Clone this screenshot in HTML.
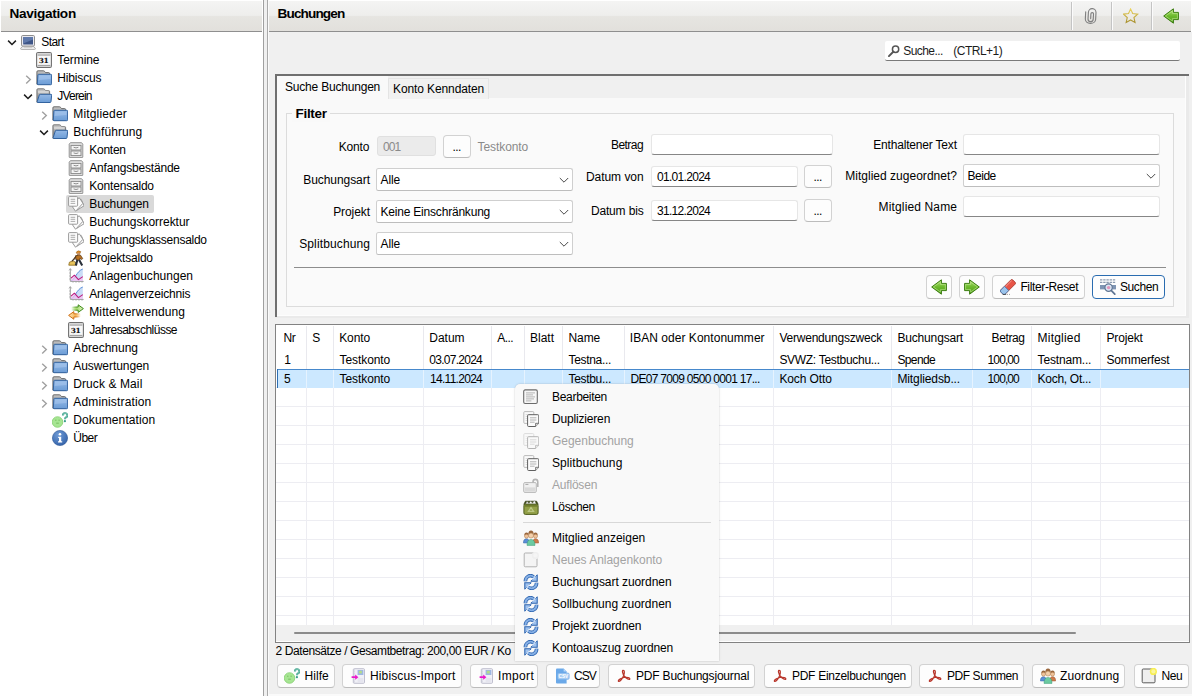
<!DOCTYPE html>
<html lang="de"><head><meta charset="utf-8"><title>Buchungen</title><style>
html,body{margin:0;padding:0;}
body{width:1192px;height:696px;overflow:hidden;background:#fff;position:relative;font-family:'Liberation Sans',sans-serif;font-size:12px;color:#000;}
div,svg.ic{position:absolute;}
.t{white-space:pre;}
.hdr{background:linear-gradient(#f4f4f3 0,#eeeeec 48%,#e6e5e1 52%,#e2e0dc 100%);border-bottom:1px solid #8f8f8f;box-sizing:border-box;}
.btn{background:#fdfdfd;border:1px solid #d2d2d2;border-bottom-color:#bcbcbc;border-radius:4px;box-sizing:border-box;}
</style></head><body>
<div class="hdr" style="left:1px;top:1px;width:261px;height:31px"></div>
<div class="t" style="left:9.40px;top:5.40px;height:18px;line-height:18px;font-size:13.6px;font-weight:bold;letter-spacing:-0.300px;">Navigation</div>
<div style="left:263px;top:0px;width:1px;height:696px;background:#a0a0a0"></div>
<div style="left:264px;top:0px;width:3px;height:696px;background:#f0f0f0"></div>
<div style="left:267px;top:0px;width:1px;height:696px;background:#a9a9a9"></div>
<svg class="ic" style="left:5.5px;top:36px" width="12" height="12" viewBox="0 0 12 12"><path d="M2.1 4.6 L6 8.5 L9.9 4.6" fill="none" stroke="#1f1f1f" stroke-width="1.5"/></svg>
<svg class="ic" style="left:20px;top:34px;" width="16" height="16" viewBox="0 0 16 16"><rect x="1.5" y="1.5" width="13" height="10.6" rx="1.2" fill="#e9e9ef" stroke="#8d8d8d"/><rect x="3.2" y="3.1" width="9.8" height="7.4" fill="#3d5587"/><path d="M3.2 3.1h9.8v2.4l-9.8 4z" fill="#5f79ab"/><path d="M0.6 14.7 L2 12.7 H14 L15.4 14.7 Q15.4 15.4 14.6 15.4 H1.4 Q.6 15.4 .6 14.7Z" fill="#f4f4f4" stroke="#9c9c9c" stroke-width=".8"/><path d="M4 13.6h8" stroke="#c9c9c9" stroke-width=".8"/></svg>
<div class="t" style="left:41.25px;top:33.00px;height:18px;line-height:18px;letter-spacing:-0.573px;">Start</div>
<svg class="ic" style="left:36px;top:52px;" width="16" height="16" viewBox="0 0 16 16"><rect x="0.6" y="0.6" width="14.8" height="14.8" rx="1.4" fill="#f7f7f7" stroke="#6f6f6f" stroke-width="1.1"/><rect x="1.2" y="1.2" width="13.6" height="1.6" fill="#d6d6d6"/><rect x="1.6" y="2.6" width="12.8" height="1" fill="#9b9b9b"/><rect x="1.6" y="12.9" width="12.8" height="1" fill="#9b9b9b"/><text x="7.7" y="10.9" font-family="DejaVu Serif, Liberation Serif, serif" font-weight="bold" font-size="6.9" text-anchor="middle" fill="#0c0c0c" stroke="#0c0c0c" stroke-width=".15">31</text></svg>
<div class="t" style="left:57.25px;top:51.00px;height:18px;line-height:18px;letter-spacing:-0.065px;">Termine</div>
<svg class="ic" style="left:21.5px;top:72px" width="12" height="12" viewBox="0 0 12 12"><path d="M4.2 3.8 L8.3 7.6 L4.2 11.4" fill="none" stroke="#a0a0a0" stroke-width="1.4"/></svg>
<svg class="ic" style="left:36px;top:70px;" width="16" height="16" viewBox="0 0 16 16"><defs><linearGradient id="fg3" x1="0" y1="0" x2="0" y2="1"><stop offset="0" stop-color="#c4c4c4"/><stop offset="1" stop-color="#7e7e7e"/></linearGradient><linearGradient id="fb3" x1="0" y1="0" x2="0" y2="1"><stop offset="0" stop-color="#95b9e6"/><stop offset="1" stop-color="#6c9dd6"/></linearGradient></defs><path d="M0.9 14.2 V1.8 Q0.9 .8 1.9 .8 H7.4 Q8.2 .8 8.7 1.5 L9.6 2.6 H12.6 Q13.6 2.6 13.6 3.6 V14.2 Z" fill="url(#fg3)" stroke="#5e5e5e" stroke-width=".9"/><path d="M2.6 4.3 H14.8 Q15.6 4.3 15.6 5.1 V13.8 Q15.6 14.7 14.7 14.7 H2 Q1.2 14.7 1.3 13.9 L1.9 5 Q2 4.3 2.6 4.3 Z" fill="url(#fb3)" stroke="#33639f" stroke-width="1"/><path d="M2.9 5.4 H14.5 V9 L2.6 10 Z" fill="#a9c8ee" opacity=".55"/></svg>
<div class="t" style="left:57.25px;top:69.00px;height:18px;line-height:18px;letter-spacing:-0.151px;">Hibiscus</div>
<svg class="ic" style="left:21.5px;top:90px" width="12" height="12" viewBox="0 0 12 12"><path d="M2.1 4.6 L6 8.5 L9.9 4.6" fill="none" stroke="#1f1f1f" stroke-width="1.5"/></svg>
<svg class="ic" style="left:36px;top:88px;" width="16" height="16" viewBox="0 0 16 16"><defs><linearGradient id="fg4" x1="0" y1="0" x2="0" y2="1"><stop offset="0" stop-color="#c4c4c4"/><stop offset="1" stop-color="#7e7e7e"/></linearGradient><linearGradient id="fb4" x1="0" y1="0" x2="0" y2="1"><stop offset="0" stop-color="#95b9e6"/><stop offset="1" stop-color="#6c9dd6"/></linearGradient></defs><path d="M0.9 14.2 V1.8 Q0.9 .8 1.9 .8 H7.4 Q8.2 .8 8.7 1.5 L9.6 2.6 H12.6 Q13.6 2.6 13.6 3.6 V14.2 Z" fill="url(#fg4)" stroke="#6d6d6d" stroke-width=".9"/><path d="M2 3.3h10.6M2 4.7h10.6" stroke="#ececec" stroke-width=".7"/><path d="M4.2 6.3 H15 Q15.8 6.3 15.7 7.1 L15 13.6 Q14.9 14.5 14 14.5 H1.8 Q.9 14.5 1.2 13.6 L3.3 7 Q3.5 6.3 4.2 6.3 Z" fill="url(#fb4)" stroke="#33639f" stroke-width="1"/></svg>
<div class="t" style="left:57.25px;top:87.00px;height:18px;line-height:18px;letter-spacing:-0.789px;">JVerein</div>
<svg class="ic" style="left:37.5px;top:108px" width="12" height="12" viewBox="0 0 12 12"><path d="M4.2 3.8 L8.3 7.6 L4.2 11.4" fill="none" stroke="#a0a0a0" stroke-width="1.4"/></svg>
<svg class="ic" style="left:52px;top:106px;" width="16" height="16" viewBox="0 0 16 16"><defs><linearGradient id="fg5" x1="0" y1="0" x2="0" y2="1"><stop offset="0" stop-color="#c4c4c4"/><stop offset="1" stop-color="#7e7e7e"/></linearGradient><linearGradient id="fb5" x1="0" y1="0" x2="0" y2="1"><stop offset="0" stop-color="#95b9e6"/><stop offset="1" stop-color="#6c9dd6"/></linearGradient></defs><path d="M0.9 14.2 V1.8 Q0.9 .8 1.9 .8 H7.4 Q8.2 .8 8.7 1.5 L9.6 2.6 H12.6 Q13.6 2.6 13.6 3.6 V14.2 Z" fill="url(#fg5)" stroke="#5e5e5e" stroke-width=".9"/><path d="M2.6 4.3 H14.8 Q15.6 4.3 15.6 5.1 V13.8 Q15.6 14.7 14.7 14.7 H2 Q1.2 14.7 1.3 13.9 L1.9 5 Q2 4.3 2.6 4.3 Z" fill="url(#fb5)" stroke="#33639f" stroke-width="1"/><path d="M2.9 5.4 H14.5 V9 L2.6 10 Z" fill="#a9c8ee" opacity=".55"/></svg>
<div class="t" style="left:73.25px;top:105.00px;height:18px;line-height:18px;letter-spacing:0.169px;">Mitglieder</div>
<svg class="ic" style="left:37.5px;top:126px" width="12" height="12" viewBox="0 0 12 12"><path d="M2.1 4.6 L6 8.5 L9.9 4.6" fill="none" stroke="#1f1f1f" stroke-width="1.5"/></svg>
<svg class="ic" style="left:52px;top:124px;" width="16" height="16" viewBox="0 0 16 16"><defs><linearGradient id="fg6" x1="0" y1="0" x2="0" y2="1"><stop offset="0" stop-color="#c4c4c4"/><stop offset="1" stop-color="#7e7e7e"/></linearGradient><linearGradient id="fb6" x1="0" y1="0" x2="0" y2="1"><stop offset="0" stop-color="#95b9e6"/><stop offset="1" stop-color="#6c9dd6"/></linearGradient></defs><path d="M0.9 14.2 V1.8 Q0.9 .8 1.9 .8 H7.4 Q8.2 .8 8.7 1.5 L9.6 2.6 H12.6 Q13.6 2.6 13.6 3.6 V14.2 Z" fill="url(#fg6)" stroke="#6d6d6d" stroke-width=".9"/><path d="M2 3.3h10.6M2 4.7h10.6" stroke="#ececec" stroke-width=".7"/><path d="M4.2 6.3 H15 Q15.8 6.3 15.7 7.1 L15 13.6 Q14.9 14.5 14 14.5 H1.8 Q.9 14.5 1.2 13.6 L3.3 7 Q3.5 6.3 4.2 6.3 Z" fill="url(#fb6)" stroke="#33639f" stroke-width="1"/></svg>
<div class="t" style="left:73.25px;top:123.00px;height:18px;line-height:18px;letter-spacing:0.099px;">Buchführung</div>
<svg class="ic" style="left:68px;top:142px;" width="16" height="16" viewBox="0 0 16 16"><path d="M2.4 .7 H13.6 L14.8 2.2 V15 Q14.8 15.6 14.2 15.6 H1.8 Q1.2 15.6 1.2 15 V2.2 Z" fill="#e0e0e0" stroke="#8a8a8a" stroke-width=".9"/><rect x="3" y="3.4" width="10" height="4.6" fill="#f4f4f4" stroke="#858585" stroke-width=".9"/><rect x="3" y="9" width="10" height="4.6" fill="#f4f4f4" stroke="#858585" stroke-width=".9"/><path d="M5.6 5.3 q2.4 1.2 4.8 0 M5.6 10.9 q2.4 1.2 4.8 0" stroke="#8f8f8f" stroke-width="1" fill="none"/></svg>
<div class="t" style="left:89.25px;top:141.00px;height:18px;line-height:18px;letter-spacing:-0.249px;">Konten</div>
<svg class="ic" style="left:68px;top:160px;" width="16" height="16" viewBox="0 0 16 16"><path d="M2.4 .7 H13.6 L14.8 2.2 V15 Q14.8 15.6 14.2 15.6 H1.8 Q1.2 15.6 1.2 15 V2.2 Z" fill="#e0e0e0" stroke="#8a8a8a" stroke-width=".9"/><rect x="3" y="3.4" width="10" height="4.6" fill="#f4f4f4" stroke="#858585" stroke-width=".9"/><rect x="3" y="9" width="10" height="4.6" fill="#f4f4f4" stroke="#858585" stroke-width=".9"/><path d="M5.6 5.3 q2.4 1.2 4.8 0 M5.6 10.9 q2.4 1.2 4.8 0" stroke="#8f8f8f" stroke-width="1" fill="none"/></svg>
<div class="t" style="left:89.25px;top:159.00px;height:18px;line-height:18px;letter-spacing:-0.187px;">Anfangsbestände</div>
<svg class="ic" style="left:68px;top:178px;" width="16" height="16" viewBox="0 0 16 16"><path d="M2.4 .7 H13.6 L14.8 2.2 V15 Q14.8 15.6 14.2 15.6 H1.8 Q1.2 15.6 1.2 15 V2.2 Z" fill="#e0e0e0" stroke="#8a8a8a" stroke-width=".9"/><rect x="3" y="3.4" width="10" height="4.6" fill="#f4f4f4" stroke="#858585" stroke-width=".9"/><rect x="3" y="9" width="10" height="4.6" fill="#f4f4f4" stroke="#858585" stroke-width=".9"/><path d="M5.6 5.3 q2.4 1.2 4.8 0 M5.6 10.9 q2.4 1.2 4.8 0" stroke="#8f8f8f" stroke-width="1" fill="none"/></svg>
<div class="t" style="left:89.25px;top:177.00px;height:18px;line-height:18px;letter-spacing:-0.193px;">Kontensaldo</div>
<div style="left:66px;top:195px;width:88px;height:18px;background:#d9d9d9;border-radius:2px"></div>
<svg class="ic" style="left:68px;top:196px;" width="16" height="16" viewBox="0 0 16 16"><g fill="#fcfcfc" stroke="#909090" stroke-width=".9"><path d="M8.5 4.5 L13.2 3.4 L16 9.8 L9 14.2 Z"/><path d="M6.5 4 L11.4 1.9 L14.9 7.3 L7.6 15.3 L4.6 11 Z"/><rect x=".6" y=".6" width="9" height="9.6" rx=".9"/></g><path d="M2.6 3.3h4.6M2.6 5.3h4.6M2.6 7.4h4.6" stroke="#a3a3a3" stroke-width=".9"/></svg>
<div class="t" style="left:89.25px;top:195.00px;height:18px;line-height:18px;letter-spacing:-0.117px;">Buchungen</div>
<svg class="ic" style="left:68px;top:214px;" width="16" height="16" viewBox="0 0 16 16"><g fill="#fcfcfc" stroke="#909090" stroke-width=".9"><path d="M8.5 4.5 L13.2 3.4 L16 9.8 L9 14.2 Z"/><path d="M6.5 4 L11.4 1.9 L14.9 7.3 L7.6 15.3 L4.6 11 Z"/><rect x=".6" y=".6" width="9" height="9.6" rx=".9"/></g><path d="M2.6 3.3h4.6M2.6 5.3h4.6M2.6 7.4h4.6" stroke="#a3a3a3" stroke-width=".9"/></svg>
<div class="t" style="left:89.25px;top:213.00px;height:18px;line-height:18px;letter-spacing:-0.026px;">Buchungskorrektur</div>
<svg class="ic" style="left:68px;top:232px;" width="16" height="16" viewBox="0 0 16 16"><g fill="#fcfcfc" stroke="#909090" stroke-width=".9"><path d="M8.5 4.5 L13.2 3.4 L16 9.8 L9 14.2 Z"/><path d="M6.5 4 L11.4 1.9 L14.9 7.3 L7.6 15.3 L4.6 11 Z"/><rect x=".6" y=".6" width="9" height="9.6" rx=".9"/></g><path d="M2.6 3.3h4.6M2.6 5.3h4.6M2.6 7.4h4.6" stroke="#a3a3a3" stroke-width=".9"/></svg>
<div class="t" style="left:89.25px;top:231.00px;height:18px;line-height:18px;letter-spacing:-0.261px;">Buchungsklassensaldo</div>
<svg class="ic" style="left:68px;top:250px;" width="16" height="16" viewBox="0 0 16 16"><path d="M.8 15.2 L1.4 12.2 L5.2 10.8 L8.6 13.2 L8.8 15.2 Z" fill="#e8c45c" stroke="#8a6a1c" stroke-width=".8"/><path d="M4 11.2 L11.8 2.8" stroke="#3e3226" stroke-width="1.2"/><path d="M8.2 2.2 q2 -2.4 4.6 -.6 l-.6 1.6 l-3.6 .2z" fill="#e48f26" stroke="#7a4e18" stroke-width=".4"/><circle cx="10.6" cy="3.9" r="1.4" fill="#c9946a"/><path d="M7.6 5.6 L12.4 5 L14.8 8.6 L13.4 9.6 L12 8 L11.8 10.2 L8 9.8 Z" fill="#b8701f" stroke="#4a3018" stroke-width=".6"/><path d="M8 6 L6.4 8.6 L7.4 9.2" fill="none" stroke="#5a3a1c" stroke-width="1.1"/><path d="M9.4 9.8 L7.8 15.4 M11.2 10 L14.2 15.4" stroke="#2a313b" stroke-width="2.1"/></svg>
<div class="t" style="left:89.25px;top:249.00px;height:18px;line-height:18px;letter-spacing:-0.204px;">Projektsaldo</div>
<svg class="ic" style="left:68px;top:268px;" width="16" height="16" viewBox="0 0 16 16"><path d="M2.3 .8 V13.4 H15.6" fill="none" stroke="#9e9e9e" stroke-width="1"/><path d="M1 2.4 L2.3 .6 L3.6 2.4 M1.2 5h1.2M1.2 8h1.2M1.2 11h1.2M5 13.4v1.3M8 13.4v1.3M11 13.4v1.3M14 13.4v1.3" fill="none" stroke="#9e9e9e" stroke-width=".8"/><path d="M3 12.6 C7 12 8.6 3 14.8 1 V13 H3 Z" fill="#c3d8f6" opacity=".9"/><path d="M3 12.6 C7 12 8.6 3 14.8 1" fill="none" stroke="#5b8fd9" stroke-width="1"/><path d="M3 10.2 L6.4 7.2 L10.4 11.6 L14.8 8.6 V13 H3 Z" fill="#f7bdf0" opacity=".7"/><path d="M3 10.2 L6.4 7.2 L10.4 11.6 L14.8 8.6" fill="none" stroke="#bb1a7c" stroke-width="1.05" stroke-linejoin="round"/></svg>
<div class="t" style="left:89.25px;top:267.00px;height:18px;line-height:18px;letter-spacing:0.024px;">Anlagenbuchungen</div>
<svg class="ic" style="left:68px;top:286px;" width="16" height="16" viewBox="0 0 16 16"><path d="M2.3 .8 V13.4 H15.6" fill="none" stroke="#9e9e9e" stroke-width="1"/><path d="M1 2.4 L2.3 .6 L3.6 2.4 M1.2 5h1.2M1.2 8h1.2M1.2 11h1.2M5 13.4v1.3M8 13.4v1.3M11 13.4v1.3M14 13.4v1.3" fill="none" stroke="#9e9e9e" stroke-width=".8"/><path d="M3 12.6 C7 12 8.6 3 14.8 1 V13 H3 Z" fill="#c3d8f6" opacity=".9"/><path d="M3 12.6 C7 12 8.6 3 14.8 1" fill="none" stroke="#5b8fd9" stroke-width="1"/><path d="M3 10.2 L6.4 7.2 L10.4 11.6 L14.8 8.6 V13 H3 Z" fill="#f7bdf0" opacity=".7"/><path d="M3 10.2 L6.4 7.2 L10.4 11.6 L14.8 8.6" fill="none" stroke="#bb1a7c" stroke-width="1.05" stroke-linejoin="round"/></svg>
<div class="t" style="left:89.25px;top:285.00px;height:18px;line-height:18px;letter-spacing:-0.163px;">Anlagenverzeichnis</div>
<svg class="ic" style="left:68px;top:304px;" width="16" height="16" viewBox="0 0 16 16"><defs><linearGradient id="ga16" x1="0" x2="1"><stop offset=".05" stop-color="#8fd04e" stop-opacity="0"/><stop offset=".45" stop-color="#a6dc6c"/><stop offset="1" stop-color="#dcf3c0"/></linearGradient><linearGradient id="gas16" x1="0" x2="1"><stop offset=".1" stop-color="#3f8a1a" stop-opacity="0"/><stop offset=".5" stop-color="#3f8a1a"/></linearGradient><linearGradient id="gb16" x1="1" x2="0"><stop offset=".05" stop-color="#f5a83d" stop-opacity="0"/><stop offset=".45" stop-color="#f7b453"/><stop offset="1" stop-color="#fde4b8"/></linearGradient><linearGradient id="gbs16" x1="1" x2="0"><stop offset=".1" stop-color="#cf6f12" stop-opacity="0"/><stop offset=".5" stop-color="#cf6f12"/></linearGradient></defs><path d="M2.5 3 H10.2 V.8 L15.4 4.6 L10.2 8.4 V6.2 H2.5 Z" fill="url(#ga16)" stroke="url(#gas16)" stroke-width="1" stroke-linejoin="round"/><path d="M13.5 9.8 H5.8 V7.6 L.6 11.4 L5.8 15.2 V13 H13.5 Z" fill="url(#gb16)" stroke="url(#gbs16)" stroke-width="1" stroke-linejoin="round"/></svg>
<div class="t" style="left:89.25px;top:303.00px;height:18px;line-height:18px;letter-spacing:0.116px;">Mittelverwendung</div>
<svg class="ic" style="left:68px;top:322px;" width="16" height="16" viewBox="0 0 16 16"><rect x="0.6" y="0.6" width="14.8" height="14.8" rx="1.4" fill="#f7f7f7" stroke="#6f6f6f" stroke-width="1.1"/><rect x="1.2" y="1.2" width="13.6" height="1.6" fill="#d6d6d6"/><rect x="1.6" y="2.6" width="12.8" height="1" fill="#9b9b9b"/><rect x="1.6" y="12.9" width="12.8" height="1" fill="#9b9b9b"/><text x="7.7" y="10.9" font-family="DejaVu Serif, Liberation Serif, serif" font-weight="bold" font-size="6.9" text-anchor="middle" fill="#0c0c0c" stroke="#0c0c0c" stroke-width=".15">31</text></svg>
<div class="t" style="left:89.25px;top:321.00px;height:18px;line-height:18px;letter-spacing:-0.517px;">Jahresabschlüsse</div>
<svg class="ic" style="left:37.5px;top:342px" width="12" height="12" viewBox="0 0 12 12"><path d="M4.2 3.8 L8.3 7.6 L4.2 11.4" fill="none" stroke="#a0a0a0" stroke-width="1.4"/></svg>
<svg class="ic" style="left:52px;top:340px;" width="16" height="16" viewBox="0 0 16 16"><defs><linearGradient id="fg18" x1="0" y1="0" x2="0" y2="1"><stop offset="0" stop-color="#c4c4c4"/><stop offset="1" stop-color="#7e7e7e"/></linearGradient><linearGradient id="fb18" x1="0" y1="0" x2="0" y2="1"><stop offset="0" stop-color="#95b9e6"/><stop offset="1" stop-color="#6c9dd6"/></linearGradient></defs><path d="M0.9 14.2 V1.8 Q0.9 .8 1.9 .8 H7.4 Q8.2 .8 8.7 1.5 L9.6 2.6 H12.6 Q13.6 2.6 13.6 3.6 V14.2 Z" fill="url(#fg18)" stroke="#5e5e5e" stroke-width=".9"/><path d="M2.6 4.3 H14.8 Q15.6 4.3 15.6 5.1 V13.8 Q15.6 14.7 14.7 14.7 H2 Q1.2 14.7 1.3 13.9 L1.9 5 Q2 4.3 2.6 4.3 Z" fill="url(#fb18)" stroke="#33639f" stroke-width="1"/><path d="M2.9 5.4 H14.5 V9 L2.6 10 Z" fill="#a9c8ee" opacity=".55"/></svg>
<div class="t" style="left:73.25px;top:339.00px;height:18px;line-height:18px;letter-spacing:0.009px;">Abrechnung</div>
<svg class="ic" style="left:37.5px;top:360px" width="12" height="12" viewBox="0 0 12 12"><path d="M4.2 3.8 L8.3 7.6 L4.2 11.4" fill="none" stroke="#a0a0a0" stroke-width="1.4"/></svg>
<svg class="ic" style="left:52px;top:358px;" width="16" height="16" viewBox="0 0 16 16"><defs><linearGradient id="fg19" x1="0" y1="0" x2="0" y2="1"><stop offset="0" stop-color="#c4c4c4"/><stop offset="1" stop-color="#7e7e7e"/></linearGradient><linearGradient id="fb19" x1="0" y1="0" x2="0" y2="1"><stop offset="0" stop-color="#95b9e6"/><stop offset="1" stop-color="#6c9dd6"/></linearGradient></defs><path d="M0.9 14.2 V1.8 Q0.9 .8 1.9 .8 H7.4 Q8.2 .8 8.7 1.5 L9.6 2.6 H12.6 Q13.6 2.6 13.6 3.6 V14.2 Z" fill="url(#fg19)" stroke="#5e5e5e" stroke-width=".9"/><path d="M2.6 4.3 H14.8 Q15.6 4.3 15.6 5.1 V13.8 Q15.6 14.7 14.7 14.7 H2 Q1.2 14.7 1.3 13.9 L1.9 5 Q2 4.3 2.6 4.3 Z" fill="url(#fb19)" stroke="#33639f" stroke-width="1"/><path d="M2.9 5.4 H14.5 V9 L2.6 10 Z" fill="#a9c8ee" opacity=".55"/></svg>
<div class="t" style="left:73.25px;top:357.00px;height:18px;line-height:18px;letter-spacing:-0.061px;">Auswertungen</div>
<svg class="ic" style="left:37.5px;top:378px" width="12" height="12" viewBox="0 0 12 12"><path d="M4.2 3.8 L8.3 7.6 L4.2 11.4" fill="none" stroke="#a0a0a0" stroke-width="1.4"/></svg>
<svg class="ic" style="left:52px;top:376px;" width="16" height="16" viewBox="0 0 16 16"><defs><linearGradient id="fg20" x1="0" y1="0" x2="0" y2="1"><stop offset="0" stop-color="#c4c4c4"/><stop offset="1" stop-color="#7e7e7e"/></linearGradient><linearGradient id="fb20" x1="0" y1="0" x2="0" y2="1"><stop offset="0" stop-color="#95b9e6"/><stop offset="1" stop-color="#6c9dd6"/></linearGradient></defs><path d="M0.9 14.2 V1.8 Q0.9 .8 1.9 .8 H7.4 Q8.2 .8 8.7 1.5 L9.6 2.6 H12.6 Q13.6 2.6 13.6 3.6 V14.2 Z" fill="url(#fg20)" stroke="#5e5e5e" stroke-width=".9"/><path d="M2.6 4.3 H14.8 Q15.6 4.3 15.6 5.1 V13.8 Q15.6 14.7 14.7 14.7 H2 Q1.2 14.7 1.3 13.9 L1.9 5 Q2 4.3 2.6 4.3 Z" fill="url(#fb20)" stroke="#33639f" stroke-width="1"/><path d="M2.9 5.4 H14.5 V9 L2.6 10 Z" fill="#a9c8ee" opacity=".55"/></svg>
<div class="t" style="left:73.25px;top:375.00px;height:18px;line-height:18px;letter-spacing:0.094px;">Druck &amp; Mail</div>
<svg class="ic" style="left:37.5px;top:396px" width="12" height="12" viewBox="0 0 12 12"><path d="M4.2 3.8 L8.3 7.6 L4.2 11.4" fill="none" stroke="#a0a0a0" stroke-width="1.4"/></svg>
<svg class="ic" style="left:52px;top:394px;" width="16" height="16" viewBox="0 0 16 16"><defs><linearGradient id="fg21" x1="0" y1="0" x2="0" y2="1"><stop offset="0" stop-color="#c4c4c4"/><stop offset="1" stop-color="#7e7e7e"/></linearGradient><linearGradient id="fb21" x1="0" y1="0" x2="0" y2="1"><stop offset="0" stop-color="#95b9e6"/><stop offset="1" stop-color="#6c9dd6"/></linearGradient></defs><path d="M0.9 14.2 V1.8 Q0.9 .8 1.9 .8 H7.4 Q8.2 .8 8.7 1.5 L9.6 2.6 H12.6 Q13.6 2.6 13.6 3.6 V14.2 Z" fill="url(#fg21)" stroke="#5e5e5e" stroke-width=".9"/><path d="M2.6 4.3 H14.8 Q15.6 4.3 15.6 5.1 V13.8 Q15.6 14.7 14.7 14.7 H2 Q1.2 14.7 1.3 13.9 L1.9 5 Q2 4.3 2.6 4.3 Z" fill="url(#fb21)" stroke="#33639f" stroke-width="1"/><path d="M2.9 5.4 H14.5 V9 L2.6 10 Z" fill="#a9c8ee" opacity=".55"/></svg>
<div class="t" style="left:73.25px;top:393.00px;height:18px;line-height:18px;letter-spacing:0.155px;">Administration</div>
<svg class="ic" style="left:52px;top:412px;" width="16" height="16" viewBox="0 0 16 16"><circle cx="5.5" cy="10" r="5.3" fill="#a6e592" stroke="#86cf72" stroke-width=".8"/><path d="M3 8.2h1.5M6.4 8.2h1.5" stroke="#7cc066" stroke-width="1"/><path d="M4.2 11.2h2.6" stroke="#7cc066" stroke-width="1.1"/><path d="M10.9 3.4 a2.2 2.2 0 1 1 3 2 q-.9 .5 -.9 1.9" fill="none" stroke="#3a9f88" stroke-width="1.9"/><path d="M10.9 3.4 a2.2 2.2 0 1 1 3 2 q-.9 .5 -.9 1.9" fill="none" stroke="#a9e0d2" stroke-width=".6"/><circle cx="12.9" cy="9.2" r="1.1" fill="#3a9f88"/></svg>
<div class="t" style="left:73.25px;top:411.00px;height:18px;line-height:18px;letter-spacing:0.111px;">Dokumentation</div>
<svg class="ic" style="left:52px;top:430px;" width="16" height="16" viewBox="0 0 16 16"><defs><radialGradient id="gi23" cx=".4" cy=".3" r=".8"><stop offset="0" stop-color="#6f9bd6"/><stop offset="1" stop-color="#2f5ea6"/></radialGradient></defs><circle cx="8" cy="8" r="7.6" fill="url(#gi23)" stroke="#2b5596" stroke-width=".6"/><circle cx="8" cy="4.3" r="1.3" fill="#fff"/><path d="M6.2 6.8 H9.2 V11.2 H10.2 V12.4 H6 V11.2 H7 V8 H6.2 Z" fill="#fff"/></svg>
<div class="t" style="left:73.25px;top:429.00px;height:18px;line-height:18px;letter-spacing:-0.489px;">Über</div>
<div style="left:268px;top:0px;width:924px;height:696px;background:#f0f0f0"></div>
<div style="left:268px;top:0px;width:1px;height:696px;background:#fbfbfb"></div>
<div style="left:268px;top:694px;width:924px;height:2px;background:#fafafa"></div>
<div class="hdr" style="left:269px;top:1px;width:922px;height:31px"></div>
<div style="left:269px;top:0px;width:923px;height:1px;background:#fff"></div>
<div style="left:1191px;top:0px;width:1px;height:32px;background:#fff"></div>
<div class="t" style="left:277.50px;top:5.40px;height:18px;line-height:18px;font-size:13.6px;font-weight:bold;letter-spacing:-0.871px;">Buchungen</div>
<div style="left:1071px;top:2px;width:1px;height:28px;background:#c4c4c4"></div>
<div style="left:1072px;top:2px;width:1px;height:28px;background:#fbfbfb"></div>
<div style="left:1111px;top:2px;width:1px;height:28px;background:#c4c4c4"></div>
<div style="left:1112px;top:2px;width:1px;height:28px;background:#fbfbfb"></div>
<div style="left:1151px;top:2px;width:1px;height:28px;background:#c4c4c4"></div>
<div style="left:1152px;top:2px;width:1px;height:28px;background:#fbfbfb"></div>
<svg class="ic" style="left:1083px;top:8px;" width="16" height="16" viewBox="0 0 16 16"><path d="M2.5 4.2 V11.2 A5.15 4.2 0 0 0 12.8 11.2 V4.4 A3.8 3.9 0 0 0 5.2 4.4 V11 A2.6 2.7 0 0 0 10.4 11 V5.8 A1.3 1.3 0 0 0 7.8 5.8 V10.6" fill="none" stroke="#808080" stroke-width="1.15" stroke-linecap="round" transform="rotate(3 8 8)"/></svg>
<svg class="ic" style="left:1123px;top:8px;" width="16" height="16" viewBox="0 0 16 16"><defs><linearGradient id="gst25" x1="0" y1="0" x2="0" y2="1"><stop offset="0" stop-color="#ecd45c"/><stop offset="1" stop-color="#a8902f"/></linearGradient></defs><path d="M7.60 0.90 L9.66 5.57 L14.73 6.08 L10.93 9.48 L12.01 14.47 L7.60 11.90 L3.19 14.47 L4.27 9.48 L0.47 6.08 L5.54 5.57 Z" fill="#f1eee4" fill-opacity=".5" stroke="url(#gst25)" stroke-width="1.1" stroke-linejoin="miter"/></svg>
<svg class="ic" style="left:1163px;top:8px;" width="16" height="16" viewBox="0 0 16 16"><defs><linearGradient id="gbk26" x1="0" y1="0" x2="0" y2="1"><stop offset="0" stop-color="#b2e276"/><stop offset=".5" stop-color="#6cba2c"/><stop offset="1" stop-color="#4f9a1c"/></linearGradient></defs><path d="M10.4 .8 V4.4 H15.4 V11.6 H10.4 V15.2 L.7 8 Z" fill="url(#gbk26)" stroke="#3b7d10" stroke-width="1" stroke-linejoin="round"/><path d="M9.4 3 V5.4 H14.4 V10.6 H9.4 V13 L2.4 8 Z" fill="none" stroke="#c6ec98" stroke-width=".7" opacity=".8"/></svg>
<div style="left:885px;top:41px;width:295px;height:20px;background:#fff;border-bottom:1px solid #7a7a7a;box-sizing:border-box;border-radius:2px"></div>
<svg class="ic" style="left:887px;top:44px;" width="14" height="14" viewBox="0 0 16 16"><circle cx="9.8" cy="6" r="3.6" fill="none" stroke="#555" stroke-width="1.7"/><path d="M7.2 8.8 L2.2 13.8" stroke="#555" stroke-width="2.2" stroke-linecap="round"/></svg>
<div class="t" style="left:903.20px;top:41.50px;height:18px;line-height:18px;color:#1c1c1c;letter-spacing:-0.562px;">Suche...</div>
<div class="t" style="left:953.30px;top:41.50px;height:18px;line-height:18px;color:#1c1c1c;letter-spacing:-0.502px;">(CTRL+1)</div>
<div style="left:275px;top:74px;width:914px;height:244px;background:#eaeaea"></div>
<div style="left:277px;top:76px;width:909px;height:240px;background:#fdfdfd"></div>
<div style="left:277px;top:76px;width:908px;height:239px;background:#f9f9f9"></div>
<div style="left:275px;top:74px;width:914px;height:2px;background:#6f6f6f"></div>
<div style="left:275px;top:74px;width:2px;height:243px;background:#6f6f6f"></div>
<div style="left:277px;top:76px;width:908px;height:22px;background:#f0f0f0"></div>
<div style="left:277px;top:76px;width:111px;height:23px;background:#f9f9f9"></div>
<div style="left:388px;top:78px;width:101px;height:21px;background:#f1f1f1;border:1px solid #e4e4e4;border-bottom:none;box-sizing:border-box"></div>
<div class="t" style="left:285.00px;top:78.00px;height:18px;line-height:18px;letter-spacing:-0.200px;">Suche Buchungen</div>
<div class="t" style="left:393.00px;top:79.50px;height:18px;line-height:18px;letter-spacing:-0.104px;">Konto Kenndaten</div>
<div style="left:286px;top:113px;width:888px;height:194px;border:1px solid #dcdcdc;box-sizing:border-box;background:#fafafa"></div>
<div style="left:292px;top:106px;width:38px;height:16px;background:#f9f9f9"></div>
<div class="t" style="left:295.50px;top:105.30px;height:18px;line-height:18px;font-size:13.5px;font-weight:bold;letter-spacing:-0.303px;">Filter</div>
<div class="t" style="left:338.70px;top:137.50px;height:18px;line-height:18px;letter-spacing:-0.140px;">Konto</div>
<div style="left:377px;top:136px;width:59px;height:20px;background:#ebebeb;border:1px solid #e0e0e0;box-sizing:border-box;border-radius:3px"></div>
<div class="t" style="left:383.00px;top:138.30px;height:18px;line-height:18px;color:#8a8a8a;letter-spacing:-0.900px;">001</div>
<div class="btn" style="left:443px;top:135px;width:28px;height:23px;"></div>
<div class="t" style="left:452.50px;top:138.00px;height:18px;line-height:18px;letter-spacing:-0.608px;">...</div>
<div class="t" style="left:477.50px;top:137.50px;height:18px;line-height:18px;color:#8a8a8a;letter-spacing:-0.072px;">Testkonto</div>
<div class="t" style="left:303.20px;top:171.00px;height:18px;line-height:18px;letter-spacing:-0.059px;">Buchungsart</div>
<div style="left:376px;top:168px;width:197px;height:23px;background:#fff;border:1px solid #cfcfcf;border-bottom-color:#bdbdbd;box-sizing:border-box;border-radius:2.5px"></div>
<div class="t" style="left:380.50px;top:170.80px;height:18px;line-height:18px;letter-spacing:-0.072px;">Alle</div>
<svg class="ic" style="left:557.5px;top:174.0px" width="12" height="12" viewBox="0 0 12 12"><path d="M1.8 4 L6 8.2 L10.2 4" fill="none" stroke="#4a4a4a" stroke-width="1"/></svg>
<div class="t" style="left:333.20px;top:203.00px;height:18px;line-height:18px;letter-spacing:-0.093px;">Projekt</div>
<div style="left:376px;top:200px;width:197px;height:23px;background:#fff;border:1px solid #cfcfcf;border-bottom-color:#bdbdbd;box-sizing:border-box;border-radius:2.5px"></div>
<div class="t" style="left:380.50px;top:202.80px;height:18px;line-height:18px;letter-spacing:-0.201px;">Keine Einschränkung</div>
<svg class="ic" style="left:557.5px;top:206.0px" width="12" height="12" viewBox="0 0 12 12"><path d="M1.8 4 L6 8.2 L10.2 4" fill="none" stroke="#4a4a4a" stroke-width="1"/></svg>
<div class="t" style="left:299.20px;top:235.00px;height:18px;line-height:18px;letter-spacing:0.128px;">Splitbuchung</div>
<div style="left:376px;top:232px;width:197px;height:23px;background:#fff;border:1px solid #cfcfcf;border-bottom-color:#bdbdbd;box-sizing:border-box;border-radius:2.5px"></div>
<div class="t" style="left:380.50px;top:234.80px;height:18px;line-height:18px;letter-spacing:-0.072px;">Alle</div>
<svg class="ic" style="left:557.5px;top:238.0px" width="12" height="12" viewBox="0 0 12 12"><path d="M1.8 4 L6 8.2 L10.2 4" fill="none" stroke="#4a4a4a" stroke-width="1"/></svg>
<div class="t" style="left:610.90px;top:136.00px;height:18px;line-height:18px;letter-spacing:-0.512px;">Betrag</div>
<div style="left:651px;top:134px;width:182px;height:21px;background:#fff;border:1px solid #e6e6e6;border-bottom:1px solid #868686;box-sizing:border-box;border-radius:3px"></div>
<div class="t" style="left:585.90px;top:168.00px;height:18px;line-height:18px;letter-spacing:-0.029px;">Datum von</div>
<div style="left:651px;top:166px;width:147px;height:21px;background:#fff;border:1px solid #e6e6e6;border-bottom:1px solid #868686;box-sizing:border-box;border-radius:3px"></div>
<div class="t" style="left:657.00px;top:167.80px;height:18px;line-height:18px;letter-spacing:-0.696px;">01.01.2024</div>
<div class="btn" style="left:804px;top:165px;width:28px;height:23px;"></div>
<div class="t" style="left:813.50px;top:168.00px;height:18px;line-height:18px;letter-spacing:-0.608px;">...</div>
<div class="t" style="left:590.90px;top:201.70px;height:18px;line-height:18px;letter-spacing:-0.154px;">Datum bis</div>
<div style="left:651px;top:200px;width:147px;height:21px;background:#fff;border:1px solid #e6e6e6;border-bottom:1px solid #868686;box-sizing:border-box;border-radius:3px"></div>
<div class="t" style="left:657.00px;top:201.80px;height:18px;line-height:18px;letter-spacing:-0.696px;">31.12.2024</div>
<div class="btn" style="left:804px;top:199px;width:28px;height:23px;"></div>
<div class="t" style="left:813.50px;top:202.00px;height:18px;line-height:18px;letter-spacing:-0.608px;">...</div>
<div class="t" style="left:873.20px;top:135.70px;height:18px;line-height:18px;letter-spacing:-0.181px;">Enthaltener Text</div>
<div style="left:963px;top:134px;width:197px;height:21px;background:#fff;border:1px solid #e6e6e6;border-bottom:1px solid #868686;box-sizing:border-box;border-radius:3px"></div>
<div class="t" style="left:845.20px;top:167.00px;height:18px;line-height:18px;letter-spacing:0.021px;">Mitglied zugeordnet?</div>
<div style="left:963px;top:164px;width:197px;height:23px;background:#fff;border:1px solid #cfcfcf;border-bottom-color:#bdbdbd;box-sizing:border-box;border-radius:2.5px"></div>
<div class="t" style="left:967.50px;top:166.80px;height:18px;line-height:18px;letter-spacing:-0.476px;">Beide</div>
<svg class="ic" style="left:1144.5px;top:170.0px" width="12" height="12" viewBox="0 0 12 12"><path d="M1.8 4 L6 8.2 L10.2 4" fill="none" stroke="#4a4a4a" stroke-width="1"/></svg>
<div class="t" style="left:878.60px;top:197.70px;height:18px;line-height:18px;letter-spacing:0.141px;">Mitglied Name</div>
<div style="left:963px;top:196px;width:197px;height:21px;background:#fff;border:1px solid #e6e6e6;border-bottom:1px solid #868686;box-sizing:border-box;border-radius:3px"></div>
<div style="left:294px;top:267px;width:872px;height:1px;background:#8d8d8d"></div>
<div class="btn" style="left:926px;top:275px;width:26px;height:24px;"></div>
<svg class="ic" style="left:931px;top:279px;" width="16" height="16" viewBox="0 0 16 16"><defs><linearGradient id="gbk28" x1="0" y1="0" x2="0" y2="1"><stop offset="0" stop-color="#b2e276"/><stop offset=".5" stop-color="#6cba2c"/><stop offset="1" stop-color="#4f9a1c"/></linearGradient></defs><path d="M10.4 .8 V4.4 H15.4 V11.6 H10.4 V15.2 L.7 8 Z" fill="url(#gbk28)" stroke="#3b7d10" stroke-width="1" stroke-linejoin="round"/><path d="M9.4 3 V5.4 H14.4 V10.6 H9.4 V13 L2.4 8 Z" fill="none" stroke="#c6ec98" stroke-width=".7" opacity=".8"/></svg>
<div class="btn" style="left:959px;top:275px;width:26px;height:24px;"></div>
<svg class="ic" style="left:964px;top:279px;" width="16" height="16" viewBox="0 0 16 16"><defs><linearGradient id="gfw29" x1="0" y1="0" x2="0" y2="1"><stop offset="0" stop-color="#b2e276"/><stop offset=".5" stop-color="#6cba2c"/><stop offset="1" stop-color="#4f9a1c"/></linearGradient></defs><path d="M5.6 .8 V4.4 H.6 V11.6 H5.6 V15.2 L15.3 8 Z" fill="url(#gfw29)" stroke="#3b7d10" stroke-width="1" stroke-linejoin="round"/><path d="M6.6 3 V5.4 H1.6 V10.6 H6.6 V13 L13.6 8 Z" fill="none" stroke="#c6ec98" stroke-width=".7" opacity=".8"/></svg>
<div class="btn" style="left:992px;top:275px;width:93px;height:24px;"></div>
<svg class="ic" style="left:1000px;top:279px;" width="16" height="16" viewBox="0 0 16 16"><g transform="rotate(-45 8 8)"><rect x="-.6" y="5" width="17" height="6" rx="1.4" fill="#e85548" stroke="#a8382e" stroke-width=".8"/><path d="M.8 5 H6 V11 H.8 Q-.6 11 -.6 9.6 V6.4 Q-.6 5 .8 5Z" fill="#9bc4ec" stroke="#4a78ad" stroke-width=".8"/><path d="M6.6 6h8.6" stroke="#f28b80" stroke-width="1"/></g><path d="M2.6 15.4h3.6" stroke="#444" stroke-width=".9"/><path d="M7 15.4h4" stroke="#888" stroke-width=".8" stroke-dasharray="1 1"/></svg>
<div class="t" style="left:1020.40px;top:278.00px;height:18px;line-height:18px;letter-spacing:-0.356px;">Filter-Reset</div>
<div class="btn" style="left:1092px;top:275px;width:73px;height:24px;border:1.5px solid #2a6cb0;"></div>
<svg class="ic" style="left:1100px;top:279px;" width="16" height="16" viewBox="0 0 16 16"><path d="M0 .9h16M0 3.3h16" stroke="#8c9bb0" stroke-width="1.3" stroke-dasharray="2.4 .8"/><rect x="0" y="6" width="16" height="4.4" fill="#7f95b3"/><circle cx="8.6" cy="8.6" r="3.7" fill="#dbe6f4" stroke="#5f7593" stroke-width="1.2"/><circle cx="8.6" cy="8.6" r="1.7" fill="#e294b8"/><path d="M11.4 11.6 L14.8 15.2" stroke="#5f7593" stroke-width="1.7" stroke-linecap="round"/></svg>
<div class="t" style="left:1120.00px;top:278.00px;height:18px;line-height:18px;letter-spacing:-0.421px;">Suchen</div>
<div style="left:275px;top:324px;width:915px;height:319px;background:#fff;border:1px solid #828282;box-sizing:border-box"></div>
<div style="left:276px;top:387px;width:913px;height:1px;background:#ededf2"></div>
<div style="left:276px;top:406px;width:913px;height:1px;background:#ededf2"></div>
<div style="left:276px;top:425px;width:913px;height:1px;background:#ededf2"></div>
<div style="left:276px;top:444px;width:913px;height:1px;background:#ededf2"></div>
<div style="left:276px;top:463px;width:913px;height:1px;background:#ededf2"></div>
<div style="left:276px;top:482px;width:913px;height:1px;background:#ededf2"></div>
<div style="left:276px;top:501px;width:913px;height:1px;background:#ededf2"></div>
<div style="left:276px;top:520px;width:913px;height:1px;background:#ededf2"></div>
<div style="left:276px;top:539px;width:913px;height:1px;background:#ededf2"></div>
<div style="left:276px;top:558px;width:913px;height:1px;background:#ededf2"></div>
<div style="left:276px;top:577px;width:913px;height:1px;background:#ededf2"></div>
<div style="left:276px;top:596px;width:913px;height:1px;background:#ededf2"></div>
<div style="left:276px;top:615px;width:913px;height:1px;background:#ededf2"></div>
<div style="left:277px;top:369px;width:912px;height:18.5px;background:#cce8ff;border-top:1px solid #4688cc;box-sizing:border-box"></div>
<div style="left:277px;top:369px;width:1px;height:18.5px;background:#2f6fb3"></div>
<div style="left:306px;top:326px;width:1px;height:43px;background:#e9e9ee"></div>
<div style="left:306px;top:370px;width:1px;height:17.5px;background:#e6f3ff"></div>
<div style="left:306px;top:388px;width:1px;height:237px;background:#ededf2"></div>
<div style="left:333px;top:326px;width:1px;height:43px;background:#e9e9ee"></div>
<div style="left:333px;top:370px;width:1px;height:17.5px;background:#e6f3ff"></div>
<div style="left:333px;top:388px;width:1px;height:237px;background:#ededf2"></div>
<div style="left:423px;top:326px;width:1px;height:43px;background:#e9e9ee"></div>
<div style="left:423px;top:370px;width:1px;height:17.5px;background:#e6f3ff"></div>
<div style="left:423px;top:388px;width:1px;height:237px;background:#ededf2"></div>
<div style="left:491px;top:326px;width:1px;height:43px;background:#e9e9ee"></div>
<div style="left:491px;top:370px;width:1px;height:17.5px;background:#e6f3ff"></div>
<div style="left:491px;top:388px;width:1px;height:237px;background:#ededf2"></div>
<div style="left:524px;top:326px;width:1px;height:43px;background:#e9e9ee"></div>
<div style="left:524px;top:370px;width:1px;height:17.5px;background:#e6f3ff"></div>
<div style="left:524px;top:388px;width:1px;height:237px;background:#ededf2"></div>
<div style="left:562px;top:326px;width:1px;height:43px;background:#e9e9ee"></div>
<div style="left:562px;top:370px;width:1px;height:17.5px;background:#e6f3ff"></div>
<div style="left:562px;top:388px;width:1px;height:237px;background:#ededf2"></div>
<div style="left:624px;top:326px;width:1px;height:43px;background:#e9e9ee"></div>
<div style="left:624px;top:370px;width:1px;height:17.5px;background:#e6f3ff"></div>
<div style="left:624px;top:388px;width:1px;height:237px;background:#ededf2"></div>
<div style="left:773px;top:326px;width:1px;height:43px;background:#e9e9ee"></div>
<div style="left:773px;top:370px;width:1px;height:17.5px;background:#e6f3ff"></div>
<div style="left:773px;top:388px;width:1px;height:237px;background:#ededf2"></div>
<div style="left:891px;top:326px;width:1px;height:43px;background:#e9e9ee"></div>
<div style="left:891px;top:370px;width:1px;height:17.5px;background:#e6f3ff"></div>
<div style="left:891px;top:388px;width:1px;height:237px;background:#ededf2"></div>
<div style="left:972px;top:326px;width:1px;height:43px;background:#e9e9ee"></div>
<div style="left:972px;top:370px;width:1px;height:17.5px;background:#e6f3ff"></div>
<div style="left:972px;top:388px;width:1px;height:237px;background:#ededf2"></div>
<div style="left:1031px;top:326px;width:1px;height:43px;background:#e9e9ee"></div>
<div style="left:1031px;top:370px;width:1px;height:17.5px;background:#e6f3ff"></div>
<div style="left:1031px;top:388px;width:1px;height:237px;background:#ededf2"></div>
<div style="left:1100px;top:326px;width:1px;height:43px;background:#e9e9ee"></div>
<div style="left:1100px;top:370px;width:1px;height:17.5px;background:#e6f3ff"></div>
<div style="left:1100px;top:388px;width:1px;height:237px;background:#ededf2"></div>
<div class="t" style="left:283.50px;top:328.50px;height:18px;line-height:18px;letter-spacing:-0.372px;">Nr</div>
<div class="t" style="left:312.25px;top:328.50px;height:18px;line-height:18px;">S</div>
<div class="t" style="left:339.25px;top:328.50px;height:18px;line-height:18px;letter-spacing:-0.140px;">Konto</div>
<div class="t" style="left:429.25px;top:328.50px;height:18px;line-height:18px;letter-spacing:-0.011px;">Datum</div>
<div class="t" style="left:497.25px;top:328.50px;height:18px;line-height:18px;letter-spacing:-0.572px;">A...</div>
<div class="t" style="left:530.00px;top:328.50px;height:18px;line-height:18px;letter-spacing:0.009px;">Blatt</div>
<div class="t" style="left:568.50px;top:328.50px;height:18px;line-height:18px;letter-spacing:-0.072px;">Name</div>
<div class="t" style="left:629.80px;top:328.50px;height:18px;line-height:18px;letter-spacing:0.037px;">IBAN oder Kontonummer</div>
<div class="t" style="left:779.40px;top:328.50px;height:18px;line-height:18px;letter-spacing:-0.217px;">Verwendungszweck</div>
<div class="t" style="left:897.40px;top:328.50px;height:18px;line-height:18px;letter-spacing:-0.159px;">Buchungsart</div>
<div class="t" style="left:1037.60px;top:328.50px;height:18px;line-height:18px;letter-spacing:0.206px;">Mitglied</div>
<div class="t" style="left:1106.50px;top:328.50px;height:18px;line-height:18px;letter-spacing:-0.177px;">Projekt</div>
<div class="t" style="left:991.50px;top:328.50px;height:18px;line-height:18px;letter-spacing:-0.372px;">Betrag</div>
<div class="t" style="left:284.25px;top:351.20px;height:18px;line-height:18px;">1</div>
<div class="t" style="left:339.50px;top:351.20px;height:18px;line-height:18px;letter-spacing:-0.072px;">Testkonto</div>
<div class="t" style="left:429.25px;top:351.20px;height:18px;line-height:18px;letter-spacing:-0.724px;">03.07.2024</div>
<div class="t" style="left:568.50px;top:351.20px;height:18px;line-height:18px;letter-spacing:-0.320px;">Testna...</div>
<div class="t" style="left:779.40px;top:351.20px;height:18px;line-height:18px;letter-spacing:-0.296px;">SVWZ: Testbuchu...</div>
<div class="t" style="left:897.40px;top:351.20px;height:18px;line-height:18px;letter-spacing:-0.615px;">Spende</div>
<div class="t" style="left:1037.60px;top:351.20px;height:18px;line-height:18px;letter-spacing:-0.173px;">Testnam...</div>
<div class="t" style="left:1106.50px;top:351.20px;height:18px;line-height:18px;letter-spacing:-0.165px;">Sommerfest</div>
<div class="t" style="left:987.60px;top:351.20px;height:18px;line-height:18px;letter-spacing:-0.900px;">100,00</div>
<div class="t" style="left:284.00px;top:369.50px;height:18px;line-height:18px;">5</div>
<div class="t" style="left:339.50px;top:369.50px;height:18px;line-height:18px;letter-spacing:-0.072px;">Testkonto</div>
<div class="t" style="left:430.00px;top:369.50px;height:18px;line-height:18px;letter-spacing:-0.708px;">14.11.2024</div>
<div class="t" style="left:568.50px;top:369.50px;height:18px;line-height:18px;letter-spacing:-0.320px;">Testbu...</div>
<div class="t" style="left:630.50px;top:369.50px;height:18px;line-height:18px;letter-spacing:-0.708px;">DE07 7009 0500 0001 17...</div>
<div class="t" style="left:779.40px;top:369.50px;height:18px;line-height:18px;letter-spacing:-0.109px;">Koch Otto</div>
<div class="t" style="left:897.40px;top:369.50px;height:18px;line-height:18px;letter-spacing:-0.103px;">Mitgliedsb...</div>
<div class="t" style="left:1037.60px;top:369.50px;height:18px;line-height:18px;letter-spacing:-0.290px;">Koch, Ot...</div>
<div class="t" style="left:987.60px;top:369.50px;height:18px;line-height:18px;letter-spacing:-0.900px;">100,00</div>
<div style="left:276px;top:625px;width:913px;height:16px;background:#f0f0f0"></div>
<div style="left:294px;top:632px;width:782px;height:2px;background:#8b8b8b;border-radius:1px"></div>
<div class="t" style="left:275.50px;top:641.70px;height:18px;line-height:18px;letter-spacing:-0.411px;">2 Datensätze / Gesamtbetrag: 200,00 EUR / Ko</div>
<div class="btn" style="left:276.5px;top:664px;width:58.0px;height:23.5px;"></div>
<svg class="ic" style="left:284.0px;top:668px;" width="16" height="16" viewBox="0 0 16 16"><circle cx="5.5" cy="10" r="5.3" fill="#a6e592" stroke="#86cf72" stroke-width=".8"/><path d="M3 8.2h1.5M6.4 8.2h1.5" stroke="#7cc066" stroke-width="1"/><path d="M4.2 11.2h2.6" stroke="#7cc066" stroke-width="1.1"/><path d="M10.9 3.4 a2.2 2.2 0 1 1 3 2 q-.9 .5 -.9 1.9" fill="none" stroke="#3a9f88" stroke-width="1.9"/><path d="M10.9 3.4 a2.2 2.2 0 1 1 3 2 q-.9 .5 -.9 1.9" fill="none" stroke="#a9e0d2" stroke-width=".6"/><circle cx="12.9" cy="9.2" r="1.1" fill="#3a9f88"/></svg>
<div class="t" style="left:304.50px;top:666.70px;height:18px;line-height:18px;letter-spacing:0.071px;">Hilfe</div>
<div class="btn" style="left:342px;top:664px;width:120px;height:23.5px;"></div>
<svg class="ic" style="left:349.5px;top:668px;" width="16" height="16" viewBox="0 0 16 16"><rect x="3.3" y=".7" width="11.2" height="14.6" rx="1" fill="#f0f0f7" stroke="#b9b9c9" stroke-width=".9"/><path d="M4.5 1.4v13.2" stroke="#c9c9d6" stroke-width=".9" stroke-dasharray="1 1"/><rect x="7.6" y="2" width="5.8" height="5" fill="#9db7e3"/><rect x="8.8" y="2.8" width="3" height="2.6" fill="#b5dd86"/><path d="M7.6 11h5.8M7.6 13h5.8" stroke="#dadae6" stroke-width="1"/><path d="M1.6 8.3 H5.2 V6.6 L8.4 9.2 L5.2 11.8 V10.1 H1.6 Z" fill="#ea1acb"/></svg>
<div class="t" style="left:370.00px;top:666.70px;height:18px;line-height:18px;letter-spacing:0.139px;">Hibiscus-Import</div>
<div class="btn" style="left:470px;top:664px;width:68px;height:23.5px;"></div>
<svg class="ic" style="left:477.5px;top:668px;" width="16" height="16" viewBox="0 0 16 16"><rect x="3.3" y=".7" width="11.2" height="14.6" rx="1" fill="#f0f0f7" stroke="#b9b9c9" stroke-width=".9"/><path d="M4.5 1.4v13.2" stroke="#c9c9d6" stroke-width=".9" stroke-dasharray="1 1"/><rect x="7.6" y="2" width="5.8" height="5" fill="#9db7e3"/><rect x="8.8" y="2.8" width="3" height="2.6" fill="#b5dd86"/><path d="M7.6 11h5.8M7.6 13h5.8" stroke="#dadae6" stroke-width="1"/><path d="M1.6 8.3 H5.2 V6.6 L8.4 9.2 L5.2 11.8 V10.1 H1.6 Z" fill="#ea1acb"/></svg>
<div class="t" style="left:498.00px;top:666.70px;height:18px;line-height:18px;letter-spacing:0.357px;">Import</div>
<div class="btn" style="left:546px;top:664px;width:54px;height:23.5px;"></div>
<svg class="ic" style="left:553.5px;top:668px;" width="16" height="16" viewBox="0 0 16 16"><path d="M3 .6 H9.6 L12.6 3.6 V15.4 H3 Q2 15.4 2 14.4 V1.6 Q2 .6 3 .6Z" fill="#6ba9e9"/><path d="M9.6 .6 V3.6 H12.6Z" fill="#b6d6f7"/><rect x="3.6" y="5" width="11.6" height="6.4" rx="1.4" fill="#a9cdf3" stroke="#6ba9e9" stroke-width=".6"/><text x="9.4" y="10.1" font-family="Liberation Sans, sans-serif" font-weight="bold" font-size="4.8" text-anchor="middle" fill="#fff">CSV</text></svg>
<div class="t" style="left:574.00px;top:666.70px;height:18px;line-height:18px;letter-spacing:-0.900px;">CSV</div>
<div class="btn" style="left:608px;top:664px;width:147px;height:23.5px;"></div>
<svg class="ic" style="left:615.5px;top:668px;" width="16" height="16" viewBox="0 0 16 16"><path d="M7 2.4 C8.8 2.2 8.5 5 7.7 7.4 C6.7 10.3 4.2 13.8 2.7 13.3 C1.4 12.8 3.8 10.2 8 9.5 C11 9 14.2 9.6 13.8 11 C13.5 12.2 10.2 10.8 8.3 8.2 C6.6 5.8 5.9 2.6 7 2.4 Z" fill="none" stroke="#b8352a" stroke-width="1.25" stroke-linejoin="round"/></svg>
<div class="t" style="left:636.00px;top:666.70px;height:18px;line-height:18px;letter-spacing:-0.191px;">PDF Buchungsjournal</div>
<div class="btn" style="left:764px;top:664px;width:148px;height:23.5px;"></div>
<svg class="ic" style="left:771.5px;top:668px;" width="16" height="16" viewBox="0 0 16 16"><path d="M7 2.4 C8.8 2.2 8.5 5 7.7 7.4 C6.7 10.3 4.2 13.8 2.7 13.3 C1.4 12.8 3.8 10.2 8 9.5 C11 9 14.2 9.6 13.8 11 C13.5 12.2 10.2 10.8 8.3 8.2 C6.6 5.8 5.9 2.6 7 2.4 Z" fill="none" stroke="#b8352a" stroke-width="1.25" stroke-linejoin="round"/></svg>
<div class="t" style="left:792.00px;top:666.70px;height:18px;line-height:18px;letter-spacing:-0.285px;">PDF Einzelbuchungen</div>
<div class="btn" style="left:919px;top:664px;width:105px;height:23.5px;"></div>
<svg class="ic" style="left:926.5px;top:668px;" width="16" height="16" viewBox="0 0 16 16"><path d="M7 2.4 C8.8 2.2 8.5 5 7.7 7.4 C6.7 10.3 4.2 13.8 2.7 13.3 C1.4 12.8 3.8 10.2 8 9.5 C11 9 14.2 9.6 13.8 11 C13.5 12.2 10.2 10.8 8.3 8.2 C6.6 5.8 5.9 2.6 7 2.4 Z" fill="none" stroke="#b8352a" stroke-width="1.25" stroke-linejoin="round"/></svg>
<div class="t" style="left:947.00px;top:666.70px;height:18px;line-height:18px;letter-spacing:-0.429px;">PDF Summen</div>
<div class="btn" style="left:1032px;top:664px;width:93px;height:23.5px;"></div>
<svg class="ic" style="left:1039.5px;top:668px;" width="16" height="16" viewBox="0 0 16 16"><path d="M.4 13 q0 -4.2 3 -4.2 q3 0 3 4.2z" fill="#5b8fd6" stroke="#3b69aa" stroke-width=".5"/><path d="M9.6 13 q0 -4.2 3 -4.2 q3 0 3 4.2z" fill="#cf7a4b" stroke="#9c5530" stroke-width=".5"/><path d="M1.3 5.4 q0 -2.8 2.2 -2.8 q2.2 0 2.2 2.8z" fill="#9a673d"/><path d="M10.3 5.4 q0 -2.8 2.2 -2.8 q2.2 0 2.2 2.8z" fill="#9a673d"/><circle cx="3.5" cy="6.2" r="2" fill="#efc39b" stroke="#a97748" stroke-width=".5"/><circle cx="12.5" cy="6.2" r="2" fill="#efc39b" stroke="#a97748" stroke-width=".5"/><path d="M4 15.4 q0 -6 4 -6 q4 0 4 6z" fill="#6ccaa2" stroke="#3a9a75" stroke-width=".5"/><path d="M5.3 4.4 q0 -3.8 2.7 -3.8 q2.7 0 2.7 3.8z" fill="#9a673d"/><circle cx="8" cy="5.6" r="2.5" fill="#f3cfaa" stroke="#a97748" stroke-width=".5"/></svg>
<div class="t" style="left:1060.00px;top:666.70px;height:18px;line-height:18px;letter-spacing:0.144px;">Zuordnung</div>
<div class="btn" style="left:1133.5px;top:664px;width:55.0px;height:23.5px;"></div>
<svg class="ic" style="left:1141.0px;top:668px;" width="16" height="16" viewBox="0 0 16 16"><rect x="1.2" y="1" width="12.8" height="13.8" rx="1" fill="#efefef" stroke="#5b5b5b" stroke-width="1"/><circle cx="12.4" cy="3.4" r="3.6" fill="#f7ee52"/><circle cx="12.4" cy="3.4" r="2.1" fill="#fbf69c"/></svg>
<div class="t" style="left:1161.50px;top:666.70px;height:18px;line-height:18px;letter-spacing:-0.408px;">Neu</div>
<div style="left:514.5px;top:384px;width:204.5px;height:277px;background:#f9f9f9;border-radius:5px 5px 0 0;box-shadow:0 0 3px rgba(0,0,0,.10), 0 0 0 0.5px rgba(0,0,0,.06)"></div>
<svg class="ic" style="left:523px;top:389px;" width="16" height="16" viewBox="0 0 16 16"><rect x=".7" y=".9" width="13.6" height="13.6" rx="1.4" fill="#f6f6f6" stroke="#6b6b6b" stroke-width="1.1"/><path d="M3 3.9h9M3 5.9h7M3 7.9h9M3 9.9h8M3 11.9h5.4" stroke="#b4b4b4" stroke-width="1"/></svg>
<div class="t" style="left:552.00px;top:387.80px;height:18px;line-height:18px;letter-spacing:-0.305px;">Bearbeiten</div>
<svg class="ic" style="left:523px;top:411px;" width="16" height="16" viewBox="0 0 16 16"><rect x=".8" y=".6" width="10" height="11.8" rx="1" fill="#fafafa" stroke="#b3b3b3" stroke-width=".9"/><path d="M2.6 3.5h6M2.6 5.5h2M2.6 7.5h2M2.6 9.5h2" stroke="#d6d6d6" stroke-width=".8"/><path d="M4.6 4.7 Q4.6 3.7 5.6 3.7 H14.8 Q15.8 3.7 15.8 4.7 V12.3 L12.6 15.5 H5.6 Q4.6 15.5 4.6 14.5 Z" fill="#fbfbfb" stroke="#5f5f5f" stroke-width="1"/><path d="M15.8 12.3 H12.6 V15.5" fill="#dedede" stroke="#5f5f5f" stroke-width=".8"/><path d="M7 6.8h6.4M7 9h6.4M7 11.2h4.6" stroke="#a9a9a9" stroke-width=".9"/></svg>
<div class="t" style="left:552.00px;top:409.80px;height:18px;line-height:18px;letter-spacing:-0.173px;">Duplizieren</div>
<svg class="ic" style="left:523px;top:433px;opacity:0.45;filter:grayscale(1);" width="16" height="16" viewBox="0 0 16 16"><rect x=".8" y=".6" width="10" height="11.8" rx="1" fill="#fafafa" stroke="#b3b3b3" stroke-width=".9"/><path d="M2.6 3.5h6M2.6 5.5h2M2.6 7.5h2M2.6 9.5h2" stroke="#d6d6d6" stroke-width=".8"/><path d="M4.6 4.7 Q4.6 3.7 5.6 3.7 H14.8 Q15.8 3.7 15.8 4.7 V12.3 L12.6 15.5 H5.6 Q4.6 15.5 4.6 14.5 Z" fill="#fbfbfb" stroke="#5f5f5f" stroke-width="1"/><path d="M15.8 12.3 H12.6 V15.5" fill="#dedede" stroke="#5f5f5f" stroke-width=".8"/><path d="M7 6.8h6.4M7 9h6.4M7 11.2h4.6" stroke="#a9a9a9" stroke-width=".9"/></svg>
<div class="t" style="left:552.00px;top:431.80px;height:18px;line-height:18px;color:#a3a3a3;letter-spacing:-0.025px;">Gegenbuchung</div>
<svg class="ic" style="left:523px;top:455px;" width="16" height="16" viewBox="0 0 16 16"><rect x=".8" y=".6" width="10" height="11.8" rx="1" fill="#fafafa" stroke="#b3b3b3" stroke-width=".9"/><path d="M2.6 3.5h6M2.6 5.5h2M2.6 7.5h2M2.6 9.5h2" stroke="#d6d6d6" stroke-width=".8"/><path d="M4.6 4.7 Q4.6 3.7 5.6 3.7 H14.8 Q15.8 3.7 15.8 4.7 V12.3 L12.6 15.5 H5.6 Q4.6 15.5 4.6 14.5 Z" fill="#fbfbfb" stroke="#5f5f5f" stroke-width="1"/><path d="M15.8 12.3 H12.6 V15.5" fill="#dedede" stroke="#5f5f5f" stroke-width=".8"/><path d="M7 6.8h6.4M7 9h6.4M7 11.2h4.6" stroke="#a9a9a9" stroke-width=".9"/></svg>
<div class="t" style="left:552.00px;top:453.80px;height:18px;line-height:18px;letter-spacing:0.083px;">Splitbuchung</div>
<svg class="ic" style="left:523px;top:477px;opacity:0.75;filter:grayscale(1);" width="16" height="16" viewBox="0 0 16 16"><path d="M10 9 V5 a2.4 2.6 0 0 1 4.8 0 V10" fill="none" stroke="#9e9e9e" stroke-width="1.6"/><rect x=".7" y="5.6" width="12.6" height="9.8" rx="1.2" fill="#ededed" stroke="#9a9a9a" stroke-width=".9"/><rect x="1.6" y="10.4" width="10.8" height="4.1" fill="#cfcfcf"/><path d="M2.4 7.4h3" stroke="#8c8c8c" stroke-width="1"/></svg>
<div class="t" style="left:552.00px;top:475.80px;height:18px;line-height:18px;color:#a3a3a3;letter-spacing:-0.200px;">Auflösen</div>
<svg class="ic" style="left:523px;top:499px;" width="16" height="16" viewBox="0 0 16 16"><path d="M.8 5.4 L2.4 2.2 H13.6 L15.2 5.4 Z" fill="#3f4a18" stroke="#343d12" stroke-width=".7"/><path d="M2.6 5 L4 2.6 L6 4.4 L7.6 2.2 L9.6 4.2 L11.4 1.6 L13.2 5 Z" fill="#fff" stroke="#888" stroke-width=".4"/><rect x=".9" y="5.2" width="14.2" height="10.2" rx="1.5" fill="#93a048" stroke="#4f5c1e" stroke-width="1"/><rect x="1.6" y="5.9" width="12.8" height="1.8" fill="#6f7d2c"/><path d="M5.4 12.4 L8 8.6 L10.6 12.4 Z" fill="none" stroke="#bcc884" stroke-width="1.2"/></svg>
<div class="t" style="left:552.00px;top:497.80px;height:18px;line-height:18px;letter-spacing:-0.346px;">Löschen</div>
<div style="left:523px;top:522px;width:188px;height:1px;background:#d8d8d8"></div>
<svg class="ic" style="left:523px;top:530px;" width="16" height="16" viewBox="0 0 16 16"><path d="M.4 13 q0 -4.2 3 -4.2 q3 0 3 4.2z" fill="#5b8fd6" stroke="#3b69aa" stroke-width=".5"/><path d="M9.6 13 q0 -4.2 3 -4.2 q3 0 3 4.2z" fill="#cf7a4b" stroke="#9c5530" stroke-width=".5"/><path d="M1.3 5.4 q0 -2.8 2.2 -2.8 q2.2 0 2.2 2.8z" fill="#9a673d"/><path d="M10.3 5.4 q0 -2.8 2.2 -2.8 q2.2 0 2.2 2.8z" fill="#9a673d"/><circle cx="3.5" cy="6.2" r="2" fill="#efc39b" stroke="#a97748" stroke-width=".5"/><circle cx="12.5" cy="6.2" r="2" fill="#efc39b" stroke="#a97748" stroke-width=".5"/><path d="M4 15.4 q0 -6 4 -6 q4 0 4 6z" fill="#6ccaa2" stroke="#3a9a75" stroke-width=".5"/><path d="M5.3 4.4 q0 -3.8 2.7 -3.8 q2.7 0 2.7 3.8z" fill="#9a673d"/><circle cx="8" cy="5.6" r="2.5" fill="#f3cfaa" stroke="#a97748" stroke-width=".5"/></svg>
<div class="t" style="left:552.00px;top:528.80px;height:18px;line-height:18px;letter-spacing:-0.007px;">Mitglied anzeigen</div>
<svg class="ic" style="left:523px;top:552px;opacity:0.45;filter:grayscale(1);" width="16" height="16" viewBox="0 0 16 16"><rect x="1.2" y="1" width="12.8" height="13.8" rx="1" fill="#efefef" stroke="#5b5b5b" stroke-width="1"/><circle cx="12.4" cy="3.4" r="3.6" fill="#f7ee52"/><circle cx="12.4" cy="3.4" r="2.1" fill="#fbf69c"/></svg>
<div class="t" style="left:552.00px;top:550.80px;height:18px;line-height:18px;color:#a3a3a3;letter-spacing:-0.027px;">Neues Anlagenkonto</div>
<svg class="ic" style="left:523px;top:574px;" width="16" height="16" viewBox="0 0 16 16"><path d="M14.2 .8 V7.2 H7.8 Z" fill="#9fc2ee"/><path d="M1.8 15.2 V8.8 H8.2 Z" fill="#9fc2ee"/><g fill="none" stroke="#2f66b0" stroke-width="3.6"><path d="M2.4 7.3 A5 5.6 0 0 1 10.6 3"/><path d="M13.6 8.7 A5 5.6 0 0 1 5.4 13"/></g><g fill="none" stroke="#86b0e6" stroke-width="1.8"><path d="M2.4 7.3 A5 5.6 0 0 1 11 3.4"/><path d="M13.6 8.7 A5 5.6 0 0 1 5 12.6"/></g><path d="M14.2 .8 V7.2 H7.8" fill="none" stroke="#2f66b0" stroke-width="1.1" stroke-linejoin="miter"/><path d="M1.8 15.2 V8.8 H8.2" fill="none" stroke="#2f66b0" stroke-width="1.1" stroke-linejoin="miter"/><path d="M14.2 .8 L12.4 2.6 M7.8 7.2 L9.4 5.6 M1.8 15.2 L3.6 13.4 M8.2 8.8 L6.6 10.4" stroke="#2f66b0" stroke-width=".9"/></svg>
<div class="t" style="left:552.00px;top:572.80px;height:18px;line-height:18px;letter-spacing:-0.063px;">Buchungsart zuordnen</div>
<svg class="ic" style="left:523px;top:596px;" width="16" height="16" viewBox="0 0 16 16"><path d="M14.2 .8 V7.2 H7.8 Z" fill="#9fc2ee"/><path d="M1.8 15.2 V8.8 H8.2 Z" fill="#9fc2ee"/><g fill="none" stroke="#2f66b0" stroke-width="3.6"><path d="M2.4 7.3 A5 5.6 0 0 1 10.6 3"/><path d="M13.6 8.7 A5 5.6 0 0 1 5.4 13"/></g><g fill="none" stroke="#86b0e6" stroke-width="1.8"><path d="M2.4 7.3 A5 5.6 0 0 1 11 3.4"/><path d="M13.6 8.7 A5 5.6 0 0 1 5 12.6"/></g><path d="M14.2 .8 V7.2 H7.8" fill="none" stroke="#2f66b0" stroke-width="1.1" stroke-linejoin="miter"/><path d="M1.8 15.2 V8.8 H8.2" fill="none" stroke="#2f66b0" stroke-width="1.1" stroke-linejoin="miter"/><path d="M14.2 .8 L12.4 2.6 M7.8 7.2 L9.4 5.6 M1.8 15.2 L3.6 13.4 M8.2 8.8 L6.6 10.4" stroke="#2f66b0" stroke-width=".9"/></svg>
<div class="t" style="left:552.00px;top:594.80px;height:18px;line-height:18px;letter-spacing:0.006px;">Sollbuchung zuordnen</div>
<svg class="ic" style="left:523px;top:618px;" width="16" height="16" viewBox="0 0 16 16"><path d="M14.2 .8 V7.2 H7.8 Z" fill="#9fc2ee"/><path d="M1.8 15.2 V8.8 H8.2 Z" fill="#9fc2ee"/><g fill="none" stroke="#2f66b0" stroke-width="3.6"><path d="M2.4 7.3 A5 5.6 0 0 1 10.6 3"/><path d="M13.6 8.7 A5 5.6 0 0 1 5.4 13"/></g><g fill="none" stroke="#86b0e6" stroke-width="1.8"><path d="M2.4 7.3 A5 5.6 0 0 1 11 3.4"/><path d="M13.6 8.7 A5 5.6 0 0 1 5 12.6"/></g><path d="M14.2 .8 V7.2 H7.8" fill="none" stroke="#2f66b0" stroke-width="1.1" stroke-linejoin="miter"/><path d="M1.8 15.2 V8.8 H8.2" fill="none" stroke="#2f66b0" stroke-width="1.1" stroke-linejoin="miter"/><path d="M14.2 .8 L12.4 2.6 M7.8 7.2 L9.4 5.6 M1.8 15.2 L3.6 13.4 M8.2 8.8 L6.6 10.4" stroke="#2f66b0" stroke-width=".9"/></svg>
<div class="t" style="left:552.00px;top:616.80px;height:18px;line-height:18px;letter-spacing:-0.079px;">Projekt zuordnen</div>
<svg class="ic" style="left:523px;top:640px;" width="16" height="16" viewBox="0 0 16 16"><path d="M14.2 .8 V7.2 H7.8 Z" fill="#9fc2ee"/><path d="M1.8 15.2 V8.8 H8.2 Z" fill="#9fc2ee"/><g fill="none" stroke="#2f66b0" stroke-width="3.6"><path d="M2.4 7.3 A5 5.6 0 0 1 10.6 3"/><path d="M13.6 8.7 A5 5.6 0 0 1 5.4 13"/></g><g fill="none" stroke="#86b0e6" stroke-width="1.8"><path d="M2.4 7.3 A5 5.6 0 0 1 11 3.4"/><path d="M13.6 8.7 A5 5.6 0 0 1 5 12.6"/></g><path d="M14.2 .8 V7.2 H7.8" fill="none" stroke="#2f66b0" stroke-width="1.1" stroke-linejoin="miter"/><path d="M1.8 15.2 V8.8 H8.2" fill="none" stroke="#2f66b0" stroke-width="1.1" stroke-linejoin="miter"/><path d="M14.2 .8 L12.4 2.6 M7.8 7.2 L9.4 5.6 M1.8 15.2 L3.6 13.4 M8.2 8.8 L6.6 10.4" stroke="#2f66b0" stroke-width=".9"/></svg>
<div class="t" style="left:552.00px;top:638.80px;height:18px;line-height:18px;letter-spacing:-0.113px;">Kontoauszug zuordnen</div>
</body></html>
